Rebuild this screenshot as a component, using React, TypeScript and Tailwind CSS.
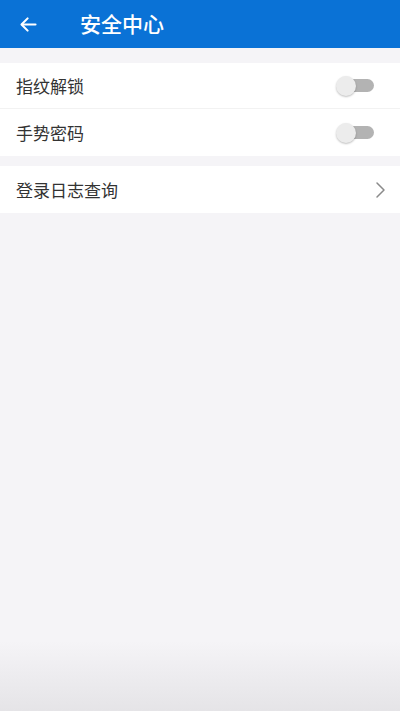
import React from "react";

function Toggle() {
  return (
    <div className="relative w-[38px] h-[20px] flex items-center">
      <div className="absolute right-0 w-[30px] h-[13px] rounded-full bg-[#b3b3b3]" />
      <div className="absolute left-0 w-[20px] h-[20px] rounded-full bg-[#ececec] shadow-[0_1px_2px_rgba(0,0,0,0.25)]" />
    </div>
  );
}

export default function App() {
  return (
    <div
      className="w-[400px] h-[711px] flex flex-col bg-[#f5f4f7] overflow-hidden"
      style={{ fontFamily: '"Noto Sans CJK SC", "Noto Sans", sans-serif' }}
    >
      <div className="h-[48px] bg-[#0a72d6] flex items-center shrink-0">
        <div className="w-[80px] pl-[18px] flex items-center">
          <svg width="21" height="21" viewBox="0 0 24 24" fill="none" stroke="white" strokeWidth="2.4" strokeLinecap="round" strokeLinejoin="round">
            <path d="M20 12H5" />
            <path d="M11 5l-7 7 7 7" />
          </svg>
        </div>
        <span className="text-white text-[21px] font-medium">安全中心</span>
      </div>
      <div className="h-[15px] shrink-0" />
      <div className="bg-white flex flex-col">
        <div className="h-[46px] flex items-center justify-between pl-[16px] pr-[26px] border-b border-[#f2f2f2]">
          <span className="text-[17px] text-[#333]">指纹解锁</span>
          <Toggle />
        </div>
        <div className="h-[47px] flex items-center justify-between pl-[16px] pr-[26px]">
          <span className="text-[17px] text-[#333]">手势密码</span>
          <Toggle />
        </div>
      </div>
      <div className="h-[10px] shrink-0" />
      <div className="bg-white h-[47px] flex items-center justify-between pl-[16px] pr-[14px]">
        <span className="text-[17px] text-[#333]">登录日志查询</span>
        <svg width="12" height="18" viewBox="0 0 12 18" fill="none" stroke="#8a8a8a" strokeWidth="1.5" strokeLinecap="round" strokeLinejoin="round">
          <path d="M3 2l7 7-7 7" />
        </svg>
      </div>
      <div className="flex-1" />
      <div className="h-[70px] shrink-0 bg-gradient-to-b from-[#f5f4f7] to-[#e5e4e7]" />
    </div>
  );
}
